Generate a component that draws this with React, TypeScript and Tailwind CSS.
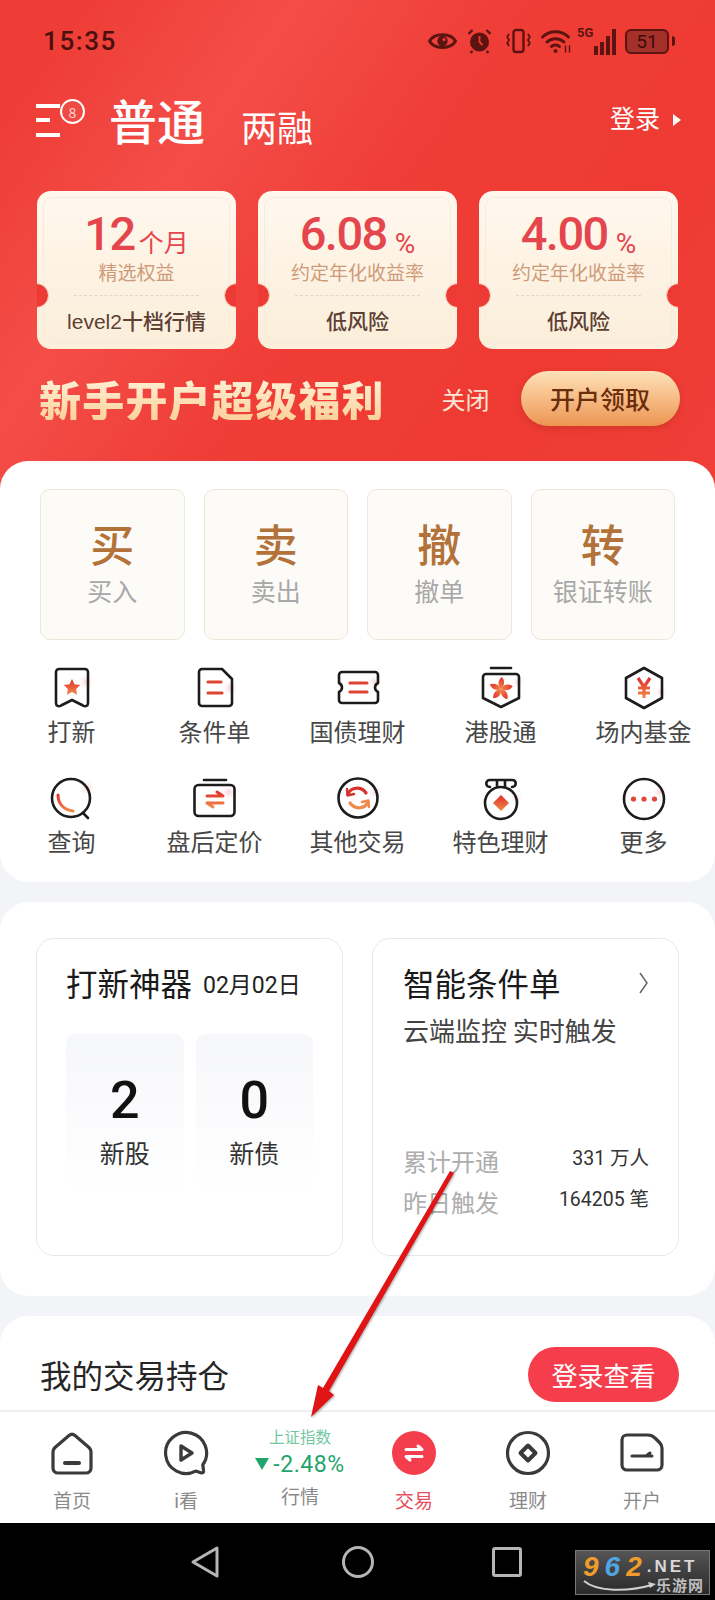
import React from 'react';

const tickets = [
  { big: '12', unit: '个月', unitClass: 'text-[25px] ml-1', sub: '精选权益', foot: 'level2十档行情' },
  { big: '6.08', unit: '%', unitClass: 'text-[28px] ml-2', sub: '约定年化收益率', foot: '低风险' },
  { big: '4.00', unit: '%', unitClass: 'text-[28px] ml-2', sub: '约定年化收益率', foot: '低风险' },
];

const tradeActions = [
  { big: '买', small: '买入' },
  { big: '卖', small: '卖出' },
  { big: '撤', small: '撤单' },
  { big: '转', small: '银证转账' },
];

const INK = '#1c1c1c';
const HOT = 'url(#hot)';

function Blob({ cx = 38, cy = 16, r = 9 }: { cx?: number; cy?: number; r?: number }) {
  return <circle cx={cx} cy={cy} r={r} fill="url(#blush)" />;
}

function IconSvg({ children }: { children: React.ReactNode }) {
  return (
    <svg width="48" height="48" viewBox="0 0 48 48" fill="none" strokeLinecap="round" strokeLinejoin="round">
      {children}
    </svg>
  );
}

const gridItems: { label: string; icon: React.ReactNode }[] = [
  {
    label: '打新',
    icon: (
      <IconSvg>
        <Blob cx={38} cy={18} r={9} />
        <path d="M11 5H37a3 3 0 0 1 3 3V39c0 3-2.500 4-5 2.500L24 36 13 41.500C10.500 43 8 42 8 39V8a3 3 0 0 1 3-3Z" stroke={INK} strokeWidth="2.600" />
        <path d="M24 15l2.500 5.200 5.700.8-4.100 4 1 5.700-5.100-2.700-5.100 2.700 1-5.700-4.100-4 5.700-.8Z" fill={HOT} />
      </IconSvg>
    ),
  },
  {
    label: '条件单',
    icon: (
      <IconSvg>
        <Blob cx={39} cy={24} r={9} />
        <path d="M11 5H31L41 15V39a3 3 0 0 1-3 3H11a3 3 0 0 1-3-3V8a3 3 0 0 1 3-3Z" stroke={INK} strokeWidth="2.600" />
        <path d="M17 18H30M17 29H31" stroke="#dd4530" strokeWidth="3.200" />
      </IconSvg>
    ),
  },
  {
    label: '国债理财',
    icon: (
      <IconSvg>
        <Blob cx={41} cy={18} r={7} />
        <path d="M8 8H41a3 3 0 0 1 3 3V19c-4 2-4 7 0 9V36a3 3 0 0 1-3 3H8a3 3 0 0 1-3-3V28c4-2 4-7 0-9V11a3 3 0 0 1 3-3Z" stroke={INK} strokeWidth="2.600" />
        <path d="M16 19H33M16 28H33" stroke="#dd4530" strokeWidth="3.200" />
      </IconSvg>
    ),
  },
  {
    label: '港股通',
    icon: (
      <IconSvg>
        <Blob cx={41} cy={18} r={7} />
        <path d="M14 4H34" stroke={INK} strokeWidth="2.600" />
        <path d="M9 10H39a3 3 0 0 1 3 3V34L24 43 6 34V13a3 3 0 0 1 3-3Z" stroke={INK} strokeWidth="2.600" />
        {[0, 72, 144, 216, 288].map(a => (
          <path key={a} transform={`rotate(${a} 24 25)`} d="M24 25C20 21 21 16 25 13C28 17 28 21 24 25Z" fill={HOT} />
        ))}
      </IconSvg>
    ),
  },
  {
    label: '场内基金',
    icon: (
      <IconSvg>
        <Blob cx={41} cy={28} r={7} />
        <path d="M24 4L42 14V34L24 44 6 34V14Z" stroke={INK} strokeWidth="2.600" />
        <path d="M18 14L24 23 30 14M24 23V34M18 24H30M18 29H30" stroke={HOT} strokeWidth="3.200" strokeLinecap="butt" strokeLinejoin="miter" />
      </IconSvg>
    ),
  },
  {
    label: '查询',
    icon: (
      <IconSvg>
        <Blob cx={39} cy={14} r={9} />
        <circle cx="23" cy="24" r="19" stroke={INK} strokeWidth="2.600" />
        <path d="M35 39L40 44" stroke={INK} strokeWidth="2.600" />
        <path d="M10 21C10 30 16 36 25 37" stroke={HOT} strokeWidth="3" />
      </IconSvg>
    ),
  },
  {
    label: '盘后定价',
    icon: (
      <IconSvg>
        <Blob cx={38} cy={18} r={9} />
        <path d="M13 6H35" stroke={INK} strokeWidth="2.600" />
        <rect x="3.500" y="11" width="40" height="31" rx="4" stroke={INK} strokeWidth="2.600" />
        <path d="M16 22H32L26 18M32 29H16L22 33" stroke={HOT} strokeWidth="3" />
      </IconSvg>
    ),
  },
  {
    label: '其他交易',
    icon: (
      <IconSvg>
        <Blob cx={41} cy={18} r={7} />
        <circle cx="24" cy="24" r="19.500" stroke={INK} strokeWidth="2.600" />
        <path d="M14 20C17 13 27 12 32 19" stroke="#d8302c" strokeWidth="3.200" />
        <path d="M34 28C31 35 21 36 16 29" stroke="#ef8a4d" strokeWidth="3.200" />
        <path d="M13 15L13.500 21.500 20 20" stroke="#d8302c" strokeWidth="2.400" />
        <path d="M35 33L34.500 26.500 28 28" stroke="#ef8a4d" strokeWidth="2.400" />
      </IconSvg>
    ),
  },
  {
    label: '特色理财',
    icon: (
      <IconSvg>
        <Blob cx={39} cy={24} r={7} />
        <path d="M13 13C8 13 8 6 13 6H35C40 6 40 13 35 13M20 6V12M28 6V12" stroke={INK} strokeWidth="2.600" />
        <circle cx="24" cy="29" r="16" stroke={INK} strokeWidth="2.600" />
        <path d="M24 21L32 29 24 37 16 29Z" fill={HOT} />
      </IconSvg>
    ),
  },
  {
    label: '更多',
    icon: (
      <IconSvg>
        <Blob cx={40} cy={18} r={8} />
        <circle cx="24" cy="25" r="20" stroke={INK} strokeWidth="2.600" />
        <circle cx="13.500" cy="25" r="2.600" fill="#e2483a" />
        <circle cx="24" cy="25" r="2.600" fill="#e2483a" />
        <circle cx="34.500" cy="25" r="2.600" fill="#e2483a" />
      </IconSvg>
    ),
  },
];

const NAV_INK = '#3a3a3a';

function NavIcon({ children }: { children: React.ReactNode }) {
  return (
    <svg width="48" height="48" viewBox="0 0 48 48" fill="none" strokeLinecap="round" strokeLinejoin="round" stroke={NAV_INK} strokeWidth="3.200">
      {children}
    </svg>
  );
}

function NavItem({ label, active, icon }: { label: string; active?: boolean; icon: React.ReactNode }) {
  return (
    <div className="w-[114px] flex flex-col items-center pt-[17px]">
      <div className="h-[48px] flex items-center justify-center">{icon}</div>
      <span className={`mt-[11px] text-[19px] leading-[24px] ${active ? 'text-[#e6505c]' : 'text-[#8a8a8a]'}`}>{label}</span>
    </div>
  );
}

function StatusIcons() {
  const c = '#5c1411';
  return (
    <div className="flex items-center">
      <svg width="29" height="24" viewBox="0 0 29 24">
        <path d="M1.500 12C6 3.500 23 3.500 27.500 12C23 20.500 6 20.500 1.500 12Z" fill="none" stroke={c} strokeWidth="3" />
        <circle cx="14.500" cy="12" r="5.200" fill={c} />
        <circle cx="16" cy="10.500" r="1.600" fill="#ee3c35" />
      </svg>
      <svg className="ml-[9px]" width="27" height="26" viewBox="0 0 26 26">
        <circle cx="13" cy="14" r="9.500" fill={c} />
        <path d="M13 8V14L16 17" fill="none" stroke="#ee3c35" strokeWidth="1.800" />
        <path d="M2 6L6 2M24 6L20 2M6 23L4 25M20 23L22 25" stroke={c} strokeWidth="2.400" />
      </svg>
      <svg className="ml-[13px]" width="25" height="26" viewBox="0 0 25 26" fill="none" stroke={c}>
        <rect x="7.500" y="2" width="10" height="22" rx="2.500" strokeWidth="2.400" />
        <path d="M3 6L1.200 9 3 12 1.200 15 3 18M22 6L23.800 9 22 12 23.800 15 22 18" strokeWidth="1.800" />
      </svg>
      <svg className="ml-[8px]" width="35" height="26" viewBox="0 0 32 26" fill="none" stroke={c} strokeLinecap="round">
        <path d="M2 9C9 2 21 2 28 9" strokeWidth="3" />
        <path d="M6.500 14C11 9.500 19 9.500 23.500 14" strokeWidth="3" />
        <path d="M11 18.500C13 16.500 17 16.500 19 18.500" strokeWidth="3" />
        <circle cx="15" cy="23" r="2" fill={c} stroke="none" />
        <path d="M25 18V24M29 24V18" strokeWidth="1.500" />
      </svg>
      <div className="relative ml-[3px] w-[39px] h-[28px] flex items-end justify-end gap-[2px]">
        <span className="absolute left-0 top-[-1px] text-[13px] leading-[13px] font-bold text-[#5c1411] font-['Roboto',sans-serif]">5G</span>
        <span className="w-[4px] h-[9px] bg-[#5c1411]" />
        <span className="w-[4px] h-[13px] bg-[#5c1411]" />
        <span className="w-[4px] h-[19px] bg-[#5c1411]" />
        <span className="w-[4px] h-[26px] bg-[#5c1411]" />
      </div>
      <div className="ml-[9px] flex items-center">
        <div className="w-[44px] h-[25px] rounded-[6px] border-2 border-[#5c1411] bg-[#a4302a] flex items-center justify-center">
          <span className="text-[19px] leading-none font-['Roboto',sans-serif] text-[#3e0c0a]">51</span>
        </div>
        <span className="ml-[3px] w-[3px] h-[10px] rounded-r-sm bg-[#5c1411]" />
      </div>
    </div>
  );
}

function Ticket({ big, unit, unitClass, sub, foot }: (typeof tickets)[number]) {
  return (
    <div className="relative w-[199px] h-[158px] rounded-[14px] bg-gradient-to-b from-[#fff8ee] to-[#fbeeda] flex flex-col items-center overflow-hidden">
      <div className="absolute inset-[6px] rounded-[10px] border border-[#f8ebda]" />
      <span className="absolute left-[-13px] top-[92px] w-[25px] h-[25px] rounded-full bg-[#ee3a35] border border-[#f5dcc6]" />
      <span className="absolute right-[-13px] top-[92px] w-[25px] h-[25px] rounded-full bg-[#ee3a35] border border-[#f5dcc6]" />
      <div className="relative mt-[14px] h-[56px] flex items-end text-[#e5454d] font-['Roboto','Noto_Sans_CJK_SC',sans-serif]">
        <span className="text-[47px] leading-[54px] font-medium tracking-[-1.500px]">{big}</span>
        <span className={`leading-[34px] font-normal ${unitClass}`}>{unit}</span>
      </div>
      <span className="relative -mt-[1px] text-[19px] leading-[24px] text-[#cf9a78]">{sub}</span>
      <div className="relative mt-[11px] w-[125px] border-t border-dashed border-[#e9d5c0]" />
      <span className="relative mt-[14px] text-[21px] leading-[24px] text-[#5c4033] font-medium font-['Liberation_Sans','Noto_Sans_CJK_SC',sans-serif]">{foot}</span>
    </div>
  );
}

export default function App() {
  return (
    <div className="relative w-[715px] h-[1600px] flex flex-col overflow-hidden bg-[#f3f4f8] font-['Noto_Sans_CJK_SC',sans-serif]">
      <svg className="absolute w-0 h-0">
        <defs>
          <linearGradient id="hot" x1="0" y1="0" x2="0" y2="1">
            <stop offset="0" stopColor="#e0302b" />
            <stop offset="1" stopColor="#f2884a" />
          </linearGradient>
          <radialGradient id="blush">
            <stop offset="0" stopColor="#f9d3d6" />
            <stop offset="1" stopColor="#ffffff" stopOpacity="0" />
          </radialGradient>
        </defs>
      </svg>

      <div className="flex-1 min-h-0 overflow-hidden">
        {/* red header */}
        <div className="h-[495px] bg-[linear-gradient(125deg,#ee3d36_8%,#f44d48_28%,#ef3e37_48%,#ee3a33_75%,#ef3f38_100%)]">
          <div className="h-[82px] flex items-center justify-between pl-[43px] pr-[40px]">
            <span className="text-[26px] leading-none text-[#4a100e] font-medium font-['Roboto',sans-serif] tracking-[1.600px]">15:35</span>
            <StatusIcons />
          </div>

          <div className="h-[80px] flex items-center pl-[36px] pr-[34px] text-white">
            <div className="relative w-[50px] h-[40px] mr-[23px]">
              <div className="absolute left-0 top-[2px] w-[24px] h-[4px] bg-white" />
              <div className="absolute left-0 top-[16px] w-[14px] h-[4px] bg-white" />
              <div className="absolute left-0 top-[31px] w-[24px] h-[4px] bg-white" />
              <div className="absolute left-[24px] top-[-3px] w-[25px] h-[25px] rounded-full border-[2.500px] border-white flex items-center justify-center text-[14px] leading-none text-[#ffd5d2] bg-[#f04a44]">8</div>
            </div>
            <span className="-mt-[6px] text-[48px] leading-none font-medium">普通</span>
            <span className="ml-[36px] mt-[8px] text-[36px] leading-none">两融</span>
            <span className="ml-auto -mt-[10px] text-[25px] leading-none">登录</span>
            <span className="ml-[13px] -mt-[4px] w-0 h-0 border-y-[6px] border-y-transparent border-l-[8px] border-l-white" />
          </div>

          <div className="mt-[29px] px-[37px] flex gap-[22px]">
            {tickets.map(t => (
              <Ticket key={t.sub + t.big} {...t} />
            ))}
          </div>

          <div className="mt-[22px] h-[55px] flex items-center pl-[39px]">
            <span className="text-[42px] leading-none font-black tracking-[1.200px] bg-gradient-to-b from-[#fff0d6] to-[#fad29b] bg-clip-text text-transparent">新手开户超级福利</span>
            <span className="ml-[57px] text-[24px] leading-none text-[#fde6d4]">关闭</span>
            <div className="ml-[31px] w-[159px] h-[55px] rounded-full bg-gradient-to-b from-[#fde2b8] to-[#ec9550] flex items-center justify-center shadow-[0_2px_6px_rgba(150,40,20,0.35)]">
              <span className="text-[25px] leading-none font-medium text-[#6b2c0b]">开户领取</span>
            </div>
          </div>
        </div>

        {/* trade card */}
        <div className="relative -mt-[34px] h-[421px] rounded-[28px] bg-white pt-[28px]">
          <div className="px-[40px] grid grid-cols-4 gap-[19px]">
            {tradeActions.map(a => (
              <div key={a.big} className="h-[151px] rounded-[10px] border border-[#efe6da] bg-[#fdfbf8] flex flex-col items-center pt-[31px]">
                <span className="text-[44px] leading-[44px] font-medium text-[#b27239]">{a.big}</span>
                <span className="mt-[11px] text-[25px] leading-[28px] text-[#a8a8a8]">{a.small}</span>
              </div>
            ))}
          </div>
          <div className="mt-[24px] grid grid-cols-5 gap-y-[31px]">
            {gridItems.map(item => (
              <div key={item.label} className="flex flex-col items-center">
                {item.icon}
                <span className="mt-[7px] text-[24px] leading-[24px] text-[#474747] whitespace-nowrap">{item.label}</span>
              </div>
            ))}
          </div>
        </div>

        {/* ipo + condition orders */}
        <div className="mt-[20px] h-[394px] rounded-[28px] bg-white pt-[36px] px-[36px] flex gap-[29px]">
          <div className="w-[307px] h-[318px] rounded-[18px] border border-[#e8e8ea] px-[29px] pt-[28px]">
            <div className="h-[32px] flex items-center">
              <span className="text-[31.500px] leading-none text-[#1a1a1a]">打新神器</span>
              <span className="ml-[11px] mt-[4px] text-[23px] leading-none text-[#222] font-['Roboto','Noto_Sans_CJK_SC',sans-serif]">02月02日</span>
            </div>
            <div className="mt-[35px] flex gap-[12px]">
              {[
                { n: '2', label: '新股' },
                { n: '0', label: '新债' },
              ].map(s => (
                <div key={s.label} className="w-[118px] h-[158px] rounded-[10px] bg-gradient-to-b from-[#f6f7fa] to-[#ffffff] flex flex-col items-center pt-[41px]">
                  <span className="text-[52px] leading-[52px] font-medium text-[#111] font-['Roboto',sans-serif]">{s.n}</span>
                  <span className="mt-[12px] text-[25px] leading-[26px] text-[#333]">{s.label}</span>
                </div>
              ))}
            </div>
          </div>
          <div className="w-[307px] h-[318px] rounded-[18px] border border-[#e8e8ea] pl-[30px] pr-[29px] pt-[28px] pb-[39px] flex flex-col">
            <div className="h-[32px] flex items-center justify-between">
              <span className="text-[31.500px] leading-none text-[#1a1a1a]">智能条件单</span>
              <svg className="mr-[-1px]" width="12" height="24" viewBox="0 0 12 24" fill="none" stroke="#666" strokeWidth="1.500">
                <path d="M2 2L9 12 2 22" />
              </svg>
            </div>
            <span className="mt-[18px] text-[26px] leading-[26px] text-[#444] whitespace-nowrap">云端监控 实时触发</span>
            <div className="mt-auto flex items-center justify-between h-[28px]">
              <span className="text-[24px] leading-none text-[#adadad]">累计开通</span>
              <span className="text-[19.500px] leading-none text-[#333] -mt-[4px] font-['Roboto','Noto_Sans_CJK_SC',sans-serif]">331 万人</span>
            </div>
            <div className="mt-[13px] flex items-center justify-between h-[28px]">
              <span className="text-[24px] leading-none text-[#adadad]">昨日触发</span>
              <span className="text-[19.500px] leading-none text-[#333] -mt-[4px] font-['Roboto','Noto_Sans_CJK_SC',sans-serif]">164205 笔</span>
            </div>
          </div>
        </div>

        {/* holdings */}
        <div className="mt-[20px] h-[200px] rounded-[28px] bg-white pt-[31px] pl-[40px] pr-[36px]">
          <div className="flex items-center justify-between h-[55px]">
            <span className="text-[31.500px] leading-none text-[#262626]">我的交易持仓</span>
            <div className="w-[151px] h-[55px] rounded-full bg-[#f63d4c] flex items-center justify-center">
              <span className="text-[26px] leading-none text-white">登录查看</span>
            </div>
          </div>
        </div>
      </div>

      {/* tab bar */}
      <div className="h-[113px] flex-none border-t-2 border-[#eeeef0] bg-white flex px-[15px]">
        <NavItem
          label="首页"
          icon={
            <NavIcon>
              <path d="M21 6.500Q24 4 27 6.500L41 18.500Q43 20.500 43 23V39a5 5 0 0 1-5 5H10a5 5 0 0 1-5-5V23Q5 20.500 7 18.500Z" />
              <path d="M17 34H31" strokeWidth="4" />
            </NavIcon>
          }
        />
        <NavItem
          label="i看"
          icon={
            <NavIcon>
              <path d="M40.800 35.800A20.500 20.500 0 1 0 33.600 42.100L39.500 44Q42 44 41.500 41.500Z" />
              <path d="M19 17L30 24 19 31Z" strokeWidth="3.400" />
            </NavIcon>
          }
        />
        <div className="w-[114px] flex flex-col items-center pt-[14px]">
          <span className="text-[15.500px] leading-[20px] text-[#72c6a0]">上证指数</span>
          <div className="mt-[6px] h-[24px] flex items-center gap-[4px] text-[#1fa56d]">
            <span className="w-0 h-0 border-x-[7px] border-x-transparent border-t-[12px] border-t-[#1fa56d]" />
            <span className="text-[23px] leading-none font-['Roboto',sans-serif] tracking-[0.600px] whitespace-nowrap">-2.48%</span>
          </div>
          <span className="mt-[8px] text-[19px] leading-[24px] text-[#8a8a8a]">行情</span>
        </div>
        <NavItem
          label="交易"
          active
          icon={
            <svg width="48" height="48" viewBox="0 0 48 48" fill="none" strokeLinecap="round" strokeLinejoin="round">
              <circle cx="24" cy="24" r="22" fill="#f43e4e" />
              <path d="M16 20.500H32L28 17M32 27.500H16L20 31" stroke="#fff" strokeWidth="3" />
            </svg>
          }
        />
        <NavItem
          label="理财"
          icon={
            <NavIcon>
              <circle cx="24" cy="24" r="20.500" />
              <path d="M24 16.500L31.500 24 24 31.500 16.500 24Z" strokeWidth="4" />
            </NavIcon>
          }
        />
        <NavItem
          label="开户"
          icon={
            <NavIcon>
              <path d="M9 6H30C33 6 35 7 37 9L41.500 13.500C43 15 44 17 44 19V36a5 5 0 0 1-5 5H9a5 5 0 0 1-5-5V11a5 5 0 0 1 5-5Z" />
              <path d="M14 27H34M28 27L32 24" strokeWidth="3" />
            </NavIcon>
          }
        />
      </div>

      {/* system nav bar */}
      <div className="h-[77px] flex-none bg-black flex items-center pl-[190px]">
        <svg width="30" height="34" viewBox="0 0 30 34" fill="none" stroke="#b5b5b5" strokeWidth="3" strokeLinejoin="round">
          <path d="M27 3V31L3 17Z" />
        </svg>
        <div className="ml-[122px] w-[32px] h-[32px] rounded-full border-[3px] border-[#b5b5b5]" />
        <div className="ml-[118px] w-[30px] h-[30px] rounded-[3px] border-[3px] border-[#b5b5b5]" />
      </div>

      {/* watermark */}
      <div className="absolute left-[575px] top-[1550px] w-[135px] h-[45px] border border-[#777] bg-gradient-to-b from-[#555] to-[#2a2a2a]">
        <div className="flex items-center pl-[7px] pt-[2px] h-[30px] font-['Liberation_Sans',sans-serif] font-bold italic">
          <span className="text-[28px] leading-[28px] tracking-[6px] text-[#ee9c2e]">9</span>
          <span className="text-[28px] leading-[28px] tracking-[6px] text-[#4fa6e2]">6</span>
          <span className="text-[28px] leading-[28px] tracking-[5px] text-[#ee9c2e]">2</span>
          <span className="text-[17px] leading-[20px] not-italic tracking-[3px] text-[#d8d8d8]">.NET</span>
        </div>
        <svg className="absolute left-[6px] top-[28px]" width="76" height="14" viewBox="0 0 76 14" fill="none">
          <path d="M2 2C15 13 45 13 70 6" stroke="#d0d0d0" strokeWidth="2" />
          <path d="M66 3L74 5 68 9Z" fill="#d0d0d0" />
        </svg>
        <span className="absolute right-[5px] bottom-[1px] text-[15px] leading-[16px] font-bold tracking-[1px] text-[#bdbdbd]">乐游网</span>
      </div>

      {/* annotation arrow */}
      <svg className="absolute left-0 top-0 pointer-events-none drop-shadow-[1px_1px_1px_rgba(0,0,0,0.35)]" width="715" height="1600">
        <path d="M450 1171L454 1173 329 1391 334 1395 311 1417 318 1385 323 1388Z" fill="#e01414" />
      </svg>
    </div>
  );
}
